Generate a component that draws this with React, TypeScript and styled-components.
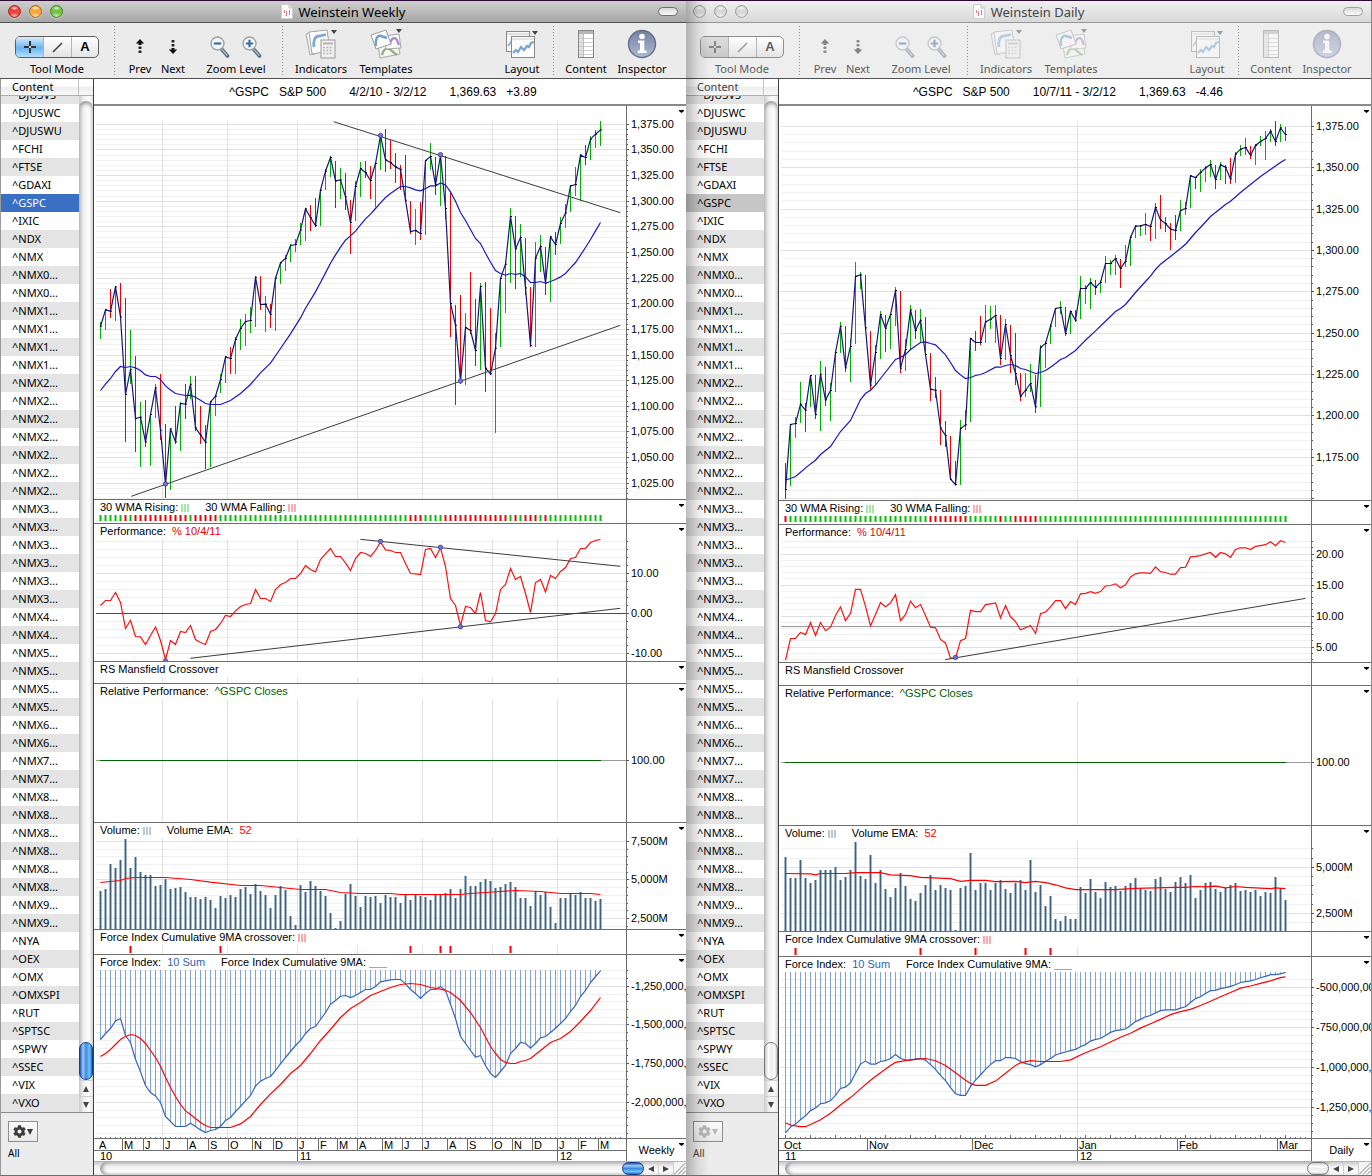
import React from "react";
import styled, { createGlobalStyle, css } from "styled-components";
import { FaCog } from "react-icons/fa";

/* ---------- data ---------- */

type Point = [number, number];
type Bar = [high: number, low: number, close: number, up: number];

interface Scale {
  unit: number;
  origin: number;
}
interface Grid {
  first: number;
  step: number;
  labels: string[];
}
interface LegendItem {
  label: string;
  value?: string;
  color?: string;
  swatch?: "bars" | "line";
}
interface Trend {
  line: [number, number, number, number];
  dots: Point[];
}
interface PaneData {
  height: number;
  legend: LegendItem[];
  scale: Scale;
  grid?: Grid;
  bars?: Bar[];
  lines?: { color: string; points: Point[] }[];
  volume?: number[];
  hatch?: number[];
  strip?: string;
  marks?: number[];
  rule?: { y: number; color: string };
  flat?: number;
  trends?: Trend[];
  timeTicks?: "even" | "weeks";
}
interface ChartData {
  title: string;
  range: string;
  price: string;
  change: string;
  period: string;
  verticals: number[];
  panes: PaneData[];
  months: { x: number; label: string }[];
  years: { x: number; label: string }[];
  active: boolean;
}

const seq = (values: number[]): Point[] => values.map((v, i) => [i, v]);

const weeklyBars: Bar[] = [
  [665,717,678,1],[627,690,629,1],[567,654,633,0],[558,662,560,1],[549,656,650,0],[594,1025,883,0],[690,852,808,1],
  [768,1056,955,0],[906,1101,951,1],[900,1041,1025,0],[940,1098,943,1],[852,953,863,1],[822,1020,990,0],[972,1194,1152,0],
  [985,1170,986,1],[918,1030,1025,0],[906,1053,910,1],[852,957,912,0],[828,897,852,1],[828,993,983,0],[918,1032,1004,0],
  [975,1106,1026,0],[903,1101,905,1],[886,948,888,1],[822,879,838,1],[768,849,770,1],[741,822,775,0],[709,822,718,1],
  [657,750,685,1],[642,738,664,1],[621,699,661,1],[528,681,531,1],[528,630,613,0],[588,696,612,1],[612,684,642,0],
  [532,693,534,1],[485,552,488,1],[465,513,475,1],[430,486,436,1],[416,456,433,1],[369,435,390,1],[324,423,326,1],
  [315,393,352,0],[294,381,376,0],[268,378,270,1],[207,270,213,1],[168,231,172,1],[183,324,242,0],[204,297,239,1],
  [219,330,290,0],[300,462,367,0],[243,363,259,1],[186,291,205,1],[183,234,217,0],[198,297,241,0],[188,321,190,1],
  [103,210,106,1],[87,216,179,0],[118,207,187,0],[159,249,200,0],[195,270,208,0],[165,306,300,0],[303,402,394,0],
  [327,435,391,1],[306,420,400,0],[178,405,181,1],[129,210,169,1],[171,285,254,0],[163,318,166,1],[168,357,325,0],
  [279,711,610,0],[615,915,675,0],[585,852,842,0],[639,855,682,1],[516,702,691,0],[597,798,751,0],[549,810,559,1],
  [546,876,804,0],[624,825,821,0],[699,999,744,1],[533,741,535,1],[490,639,492,1],[324,549,349,1],[348,567,446,0],
  [372,531,412,1],[414,585,563,0],[561,741,736,0],[426,741,474,1],[405,516,439,1],[441,585,549,0],[408,606,410,1],
  [396,465,433,0],[351,432,370,1],[312,384,338,1],[255,336,257,1],[201,288,253,1],[162,303,165,1],[135,195,172,0],
  [108,180,117,1],[90,144,102,1],[63,138,89,1],
];

const weeklyAverage: Point[] = [
  [0,871],[1,852],[2,835],[3,814],[4,799],[5,802],[6,799],[7,803],[8,811],[9,824],[10,829],[11,829],[12,838],[13,857],
  [14,869],[15,880],[16,883],[17,886],[18,885],[19,891],[20,900],[21,910],[22,913],[24,913],[26,901],[28,880],[30,853],
  [32,818],[34,789],[36,745],[38,701],[40,653],[41,624],[43,575],[44,547],[45,518],[46,489],[47,464],[48,441],[49,420],
  [50,407],[51,393],[52,374],[53,356],[54,342],[55,325],[56,308],[57,292],[58,280],[59,269],[60,259],[61,259],[62,263],
  [63,269],[64,272],[65,265],[66,257],[67,257],[68,248],[69,254],[70,275],[71,303],[72,337],[73,361],[74,388],[75,415],
  [76,430],[77,459],[78,486],[79,511],[80,520],[81,525],[82,520],[83,523],[84,520],[85,530],[86,547],[87,547],[88,544],
  [89,549],[90,544],[91,538],[92,530],[93,520],[94,503],[95,487],[96,465],[97,442],[98,418],[99,392],[100,367],
];

const weeklyPerformance = [
  331,316,316,292,322,400,376,424,425,448,421,395,436,493,436,448,409,412,391,433,442,448,409,403,385,361,364,347,334,
  328,325,283,310,310,319,283,268,262,250,250,235,211,223,230,193,176,160,184,184,203,226,190,172,175,184,166,140,164,
  166,172,172,205,235,236,238,163,160,187,158,214,310,331,391,334,337,355,292,376,380,355,283,268,220,253,244,295,352,
  262,253,290,241,250,229,217,190,187,160,160,142,136,133,
];

const weeklyVolume = [
  213,205,132,142,118,55,142,109,154,163,163,196,193,177,205,202,199,214,229,229,235,229,238,262,226,232,223,229,205,
  199,220,190,211,223,262,223,196,208,286,313,193,214,181,196,211,226,277,322,301,220,190,226,259,226,229,226,247,223,
  229,229,247,223,238,223,226,229,238,220,220,217,205,232,205,166,196,196,184,175,181,202,199,190,184,199,232,232,256,
  211,223,214,259,307,232,232,220,223,214,232,232,241,235,
];

const weeklyVolumeAverage: Point[] = [
  [0,187],[4,181],[5,175],[7,172],[13,172],[18,178],[22,186],[28,196],[32,196],[38,205],[40,208],[45,208],[48,217],
  [52,220],[58,220],[60,223],[72,223],[74,220],[80,214],[83,211],[88,214],[90,217],[92,220],[98,220],[100,223],
];

const weeklyForce = [
  658,640,625,602,595,646,667,717,755,796,817,827,847,889,904,919,919,919,909,919,929,937,931,928,919,901,892,874,859,
  842,826,798,783,775,769,751,731,712,694,676,661,640,625,619,598,577,552,541,528,526,532,526,517,508,508,499,485,482,
  479,478,478,491,508,520,535,520,508,508,499,511,552,595,649,670,691,711,706,736,760,772,754,736,700,685,667,670,684,
  670,653,649,637,624,610,595,574,556,529,511,487,469,452,
];

const weeklyForceAverage: Point[] = [
  [0,709],[1,700],[2,688],[3,673],[4,658],[5,649],[6,643],[7,646],[8,655],[9,670],[10,691],[11,712],[12,738],[13,771],
  [14,802],[15,829],[16,853],[17,872],[18,883],[19,895],[20,907],[21,916],[22,922],[26,922],[28,911],[30,889],[32,853],
  [34,821],[36,793],[38,760],[40,736],[42,700],[44,661],[46,628],[48,592],[50,565],[52,547],[54,526],[56,514],[58,502],
  [60,493],[62,490],[64,493],[66,502],[68,507],[69,511],[70,517],[72,541],[74,577],[76,622],[78,679],[79,700],[80,718],
  [81,727],[82,730],[83,730],[84,724],[85,721],[86,715],[88,691],[90,667],[92,655],[94,634],[96,604],[98,571],[100,532],
];

const dailyBars: Bar[] = [
  [1149,1257,1228,0],[1032,1218,1033,1],[1011,1074,1030,1],[906,1029,972,1],[969,1056,990,0],[886,981,886,1],
  [885,1017,1003,0],[843,1053,882,1],[861,978,959,0],[909,1023,931,1],[815,934,817,1],[726,819,738,1],[738,876,863,0],
  [777,906,799,1],[546,792,589,1],[576,627,584,1],[585,745,743,0],[753,933,915,0],[795,914,817,1],[693,837,703,1],
  [705,815,744,0],[702,807,703,1],[621,738,631,1],[633,879,864,0],[777,873,808,1],[675,809,689,1],[690,777,751,0],
  [687,789,720,1],[711,825,823,0],[819,963,927,0],[891,954,930,0],[930,1095,1043,0],[1023,1101,1066,0],
  [1068,1200,1197,0],[1143,1215,1213,0],[1020,1215,1045,1],[990,1050,1034,1],[774,1026,775,1],[753,813,787,0],
  [708,795,787,0],[675,789,725,1],[678,747,717,1],[675,789,706,1],[705,855,835,0],[717,840,733,1],[735,877,826,0],
  [759,915,880,0],[879,963,948,0],[879,951,931,1],[852,936,910,1],[885,999,980,0],[795,981,802,1],[783,863,790,1],
  [732,792,738,1],[684,741,685,1],[663,702,682,1],[681,768,760,0],[693,762,694,1],[690,725,720,0],[588,717,625,1],
  [615,672,625,1],[594,687,607,1],[600,645,622,0],[600,639,607,1],[528,609,550,1],[540,585,550,1],[525,585,535,1],
  [537,624,565,0],[495,561,543,1],[468,558,471,1],[435,474,438,1],[435,468,437,1],[399,465,433,1],[432,483,439,0],
  [369,477,382,1],[345,447,419,0],[411,456,430,0],[429,510,447,0],[405,480,451,0],[360,453,391,1],[366,405,385,1],
  [285,384,287,1],[291,327,292,0],[267,336,277,1],[258,306,263,1],[240,291,253,1],[255,327,298,0],[246,300,254,1],
  [255,312,261,0],[234,312,296,0],[216,309,222,1],[195,228,207,1],[174,225,202,1],[198,237,225,0],[192,255,196,1],
  [168,198,184,1],[153,240,175,1],[147,186,153,1],[123,198,184,0],[132,186,143,1],[141,183,163,0],
];

const dailyAverage: Point[] = [
  [0,1199],[1,1195],[2,1189],[5,1151],[6,1140],[7,1123],[9,1099],[11,1054],[13,1021],[15,958],[16,940],[17,930],
  [18,915],[19,895],[22,838],[23,832],[24,823],[25,808],[27,787],[28,785],[29,790],[30,794],[32,824],[33,847],[34,871],
  [35,884],[36,895],[37,892],[38,886],[39,883],[40,877],[42,861],[43,861],[44,856],[45,853],[46,856],[47,865],[48,868],
  [50,880],[51,877],[52,871],[53,861],[54,850],[55,838],[56,832],[57,821],[58,811],[60,780],[62,752],[64,723],[66,694],
  [67,685],[68,673],[70,637],[72,604],[73,588],[74,568],[75,552],[77,529],[79,505],[80,492],[81,475],[82,457],[83,442],
  [85,409],[87,385],[88,373],[89,363],[91,337],[93,313],[95,289],[97,268],[99,247],[100,238],
];

const dailyPerformance = [
  380,330,330,316,321,293,323,293,312,304,277,257,289,272,217,217,256,301,275,247,257,248,229,289,275,244,259,252,277,
  304,305,332,340,375,375,335,330,265,268,268,252,250,248,282,254,280,291,310,305,300,318,273,269,257,243,243,261,245,
  252,227,226,222,226,222,209,208,204,213,206,188,181,179,179,180,165,176,178,182,182,167,166,142,141,139,135,132,143,
  132,135,143,125,121,121,125,118,116,114,107,116,105,109,
];

const dailyVolume = [
  832,881,881,841,881,894,887,864,862,862,857,887,878,862,798,876,884,829,894,862,906,924,904,871,899,929,934,917,897,
  874,908,897,904,908,1000,904,899,823,908,894,894,910,892,887,906,917,894,887,908,841,914,897,945,922,975,980,970,975,
  975,901,917,884,914,927,890,901,899,912,899,894,881,904,910,912,883,879,906,914,890,879,894,874,927,910,894,890,906,
  914,904,897,894,912,908,914,908,922,914,917,878,904,932,
];

const dailyVolumeAverage: Point[] = [
  [0,871],[5,872],[6,874],[7,871],[12,871],[14,869],[19,869],[21,874],[25,876],[27,880],[33,883],[35,889],[37,887],
  [40,887],[42,890],[46,889],[48,892],[50,889],[52,892],[54,897],[56,904],[58,908],[66,908],[70,905],[78,903],[80,903],
  [82,901],[84,902],[86,900],[88,904],[90,901],[92,903],[97,906],[98,904],[100,906],
];

const dailyForce = [
  1468,1455,1448,1438,1429,1417,1411,1401,1399,1394,1382,1366,1363,1353,1331,1310,1303,1310,1310,1304,1302,1297,1288,
  1297,1300,1301,1298,1297,1301,1311,1322,1336,1348,1364,1378,1382,1382,1362,1347,1335,1322,1311,1302,1302,1295,1295,
  1297,1304,1309,1311,1316,1311,1304,1297,1289,1285,1282,1279,1276,1270,1265,1257,1253,1251,1244,1237,1233,1231,1229,
  1221,1212,1207,1201,1198,1192,1187,1185,1185,1185,1181,1178,1168,1159,1155,1147,1141,1140,1136,1134,1131,1127,1122,
  1120,1118,1115,1111,1108,1104,1104,1102,1099,
];

const dailyForceAverage: Point[] = [
  [0,1445],[1,1450],[2,1452],[3,1454],[4,1454],[5,1449],[7,1438],[9,1423],[11,1404],[13,1387],[15,1367],[17,1347],
  [19,1330],[21,1313],[22,1306],[24,1302],[26,1299],[28,1297],[30,1302],[32,1313],[34,1330],[36,1347],[37,1354],
  [38,1359],[40,1359],[42,1349],[44,1331],[46,1313],[47,1307],[49,1302],[51,1304],[55,1304],[57,1300],[59,1289],
  [61,1279],[63,1270],[65,1259],[67,1248],[69,1239],[71,1227],[73,1217],[75,1207],[77,1196],[79,1189],[81,1184],
  [83,1175],[85,1165],[87,1155],[89,1145],[91,1135],[93,1130],[95,1124],[97,1118],[99,1111],[100,1109],
];

const strip = (ranges: [string, number][]) => ranges.map(([c, n]) => c.repeat(n)).join("");
const weeklyStrip = strip([
  ["g",5],["r",1],["g",1],["r",11],["g",1],["r",5],["g",38],["r",3],["g",4],["r",13],["g",1],["r",1],["g",1],["r",3],
  ["g",1],["r",1],["g",11],
]);
const dailyStrip = strip([["r",1],["g",28],["r",8],["g",6],["r",1],["g",2],["r",5],["g",50]]);

const plain: Scale = { unit: 1, origin: 0 };
const wmaLegend: LegendItem[] = [
  { label: "30 WMA Rising:", swatch: "bars", color: "#a6e8a6" },
  { label: "30 WMA Falling:", swatch: "bars", color: "#f9b0b0" },
];
const performanceLegend: LegendItem[] = [{ label: "Performance:", value: "% 10/4/11", color: "#e60000" }];
const mansfieldLegend: LegendItem[] = [{ label: "RS Mansfield Crossover" }];
const relativeLegend: LegendItem[] = [{ label: "Relative Performance:", value: "^GSPC Closes", color: "#006000" }];
const volumeLegend: LegendItem[] = [
  { label: "Volume:", swatch: "bars", color: "#bcc8d2" },
  { label: "Volume EMA:", value: "52", color: "#ff0000" },
];
const crossoverLegend: LegendItem[] = [
  { label: "Force Index Cumulative 9MA crossover:", swatch: "bars", color: "#ffa8a8" },
];
const forceLegend: LegendItem[] = [
  { label: "Force Index:", value: "10 Sum", color: "#2f5fae" },
  { label: "Force Index Cumulative 9MA:", swatch: "line", color: "#ff8080" },
];

const priceLabels = (top: number, count: number) =>
  Array.from({ length: count }, (_, i) => (top - i * 25).toLocaleString("en-US", { minimumFractionDigits: 2 }));

const weeklyMonths: [number, string][] = [
  [3,"A"],[28,"M"],[49,"J"],[69,"J"],[93,"A"],[114,"S"],[134,"O"],[158,"N"],[179,"D"],[203,"J"],[224,"F"],[243,"M"],
  [263,"A"],[288,"M"],[308,"J"],[328,"J"],[353,"A"],[373,"S"],[398,"O"],[418,"N"],[438,"D"],[463,"J"],[484,"F"],[504,"M"],
];

const weekly: ChartData = {
  title: "Weinstein Weekly",
  range: "4/2/10 - 3/2/12",
  price: "1,369.63",
  change: "+3.89",
  period: "Weekly",
  active: true,
  verticals: [68, 133, 203, 263, 328, 398, 463],
  months: weeklyMonths.map(([x, label]) => ({ x, label })),
  years: [{ x: 3, label: "10" }, { x: 203, label: "11" }, { x: 463, label: "12" }],
  panes: [
    {
      height: 394, legend: [], scale: { unit: 3, origin: -21 },
      grid: { first: 3.3, step: 25.64, labels: priceLabels(1375, 15) },
      bars: weeklyBars,
      lines: [{ color: "#1a14c8", points: weeklyAverage }],
      trends: [
        { line: [239.7, 0.7, 526.3, 91.7], dots: [[56, 14.5], [68, 33.7]] },
        { line: [37.3, 375.3, 526.3, 204.3], dots: [[13, 363], [72, 260]] },
      ],
    },
    { height: 24, legend: wmaLegend, scale: plain, strip: weeklyStrip },
    {
      height: 138, legend: performanceLegend, scale: { unit: 3, origin: -44 },
      grid: { first: 34.3, step: 40, labels: ["10.00", "0.00", "-10.00"] },
      rule: { y: 74, color: "#ff0000" },
      lines: [{ color: "#ff1010", points: seq(weeklyPerformance) }],
      trends: [
        { line: [266.3, 0.3, 526.3, 27.3], dots: [[56, 2.3], [68, 8.3]] },
        { line: [96.3, 119.3, 526.3, 69.3], dots: [[13, 122], [72, 87.7]] },
      ],
    },
    { height: 22, legend: mansfieldLegend, scale: plain },
    { height: 139, legend: relativeLegend, scale: plain, flat: 61 },
    {
      height: 107, legend: volumeLegend, scale: { unit: 3, origin: -18 },
      grid: { first: 3.3, step: 38.6, labels: ["7,500M", "5,000M", "2,500M"] },
      volume: weeklyVolume,
      lines: [{ color: "#ff0000", points: weeklyVolumeAverage }],
    },
    { height: 25, legend: crossoverLegend, scale: plain, marks: [6, 24, 62, 68, 70, 82] },
    {
      height: 184, legend: forceLegend, scale: { unit: 3, origin: -150 },
      grid: { first: 16.3, step: 38.67, labels: ["-1,250,000,", "-1,500,000,", "-1,750,000,", "-2,000,000,"] },
      hatch: weeklyForce,
      timeTicks: "even",
      lines: [
        { color: "#3565b5", points: seq(weeklyForce) },
        { color: "#ff0000", points: weeklyForceAverage },
      ],
    },
  ],
};

const daily: ChartData = {
  title: "Weinstein Daily",
  range: "10/7/11 - 3/2/12",
  price: "1,369.63",
  change: "-4.46",
  period: "Daily",
  active: false,
  verticals: [298],
  months: [
    { x: 3, label: "Oct" }, { x: 88, label: "Nov" }, { x: 193, label: "Dec" },
    { x: 298, label: "Jan" }, { x: 398, label: "Feb" }, { x: 498, label: "Mar" },
  ],
  years: [{ x: 3, label: "11" }, { x: 298, label: "12" }],
  panes: [
    {
      height: 395, legend: [], scale: { unit: 3, origin: -41 },
      grid: { first: 5.3, step: 41.38, labels: priceLabels(1375, 9) },
      bars: dailyBars,
      lines: [{ color: "#1a14c8", points: dailyAverage }],
    },
    { height: 24, legend: wmaLegend, scale: plain, strip: dailyStrip },
    {
      height: 138, legend: performanceLegend, scale: { unit: 2.3025, origin: -45 },
      grid: { first: 14, step: 31, labels: ["20.00", "15.00", "10.00", "5.00"] },
      rule: { y: 86, color: "#999999" },
      lines: [{ color: "#ff1010", points: seq(dailyPerformance) }],
      trends: [{ line: [166.2, 119.6, 526.5, 58.4], dots: [[34, 117.4]] }],
    },
    { height: 23, legend: mansfieldLegend, scale: plain },
    { height: 140, legend: relativeLegend, scale: plain, flat: 61 },
    {
      height: 106, legend: volumeLegend, scale: { unit: 2.3025, origin: -346 },
      grid: { first: 26.2, step: 46, labels: ["5,000M", "2,500M"] },
      volume: dailyVolume,
      lines: [{ color: "#ff0000", points: dailyVolumeAverage }],
    },
    { height: 25, legend: crossoverLegend, scale: plain, marks: [2, 27, 38, 48, 53] },
    {
      height: 182, legend: forceLegend, scale: { unit: 2.3025, origin: -477 },
      grid: { first: 15.5, step: 40, labels: ["-500,000,00", "-750,000,00", "-1,000,000,", "-1,250,000,"] },
      hatch: dailyForce,
      timeTicks: "weeks",
      lines: [
        { color: "#3565b5", points: seq(dailyForce) },
        { color: "#ff0000", points: dailyForceAverage },
      ],
    },
  ],
};

const repeat = (name: string, n: number) => Array<string>(n).fill(name);
const symbols = [
  "^DJUSVS", "^DJUSWC", "^DJUSWU", "^FCHI", "^FTSE", "^GDAXI", "^GSPC", "^IXIC", "^NDX", "^NMX",
  ...repeat("^NMX0…", 2), ...repeat("^NMX1…", 4), ...repeat("^NMX2…", 7), ...repeat("^NMX3…", 6),
  ...repeat("^NMX4…", 2), ...repeat("^NMX5…", 4), ...repeat("^NMX6…", 2), ...repeat("^NMX7…", 2),
  ...repeat("^NMX8…", 6), ...repeat("^NMX9…", 2),
  "^NYA", "^OEX", "^OMX", "^OMXSPI", "^RUT", "^SPTSC", "^SPWY", "^SSEC", "^VIX", "^VXO",
];

/* ---------- styles ---------- */

const ui = '"Noto Sans", "Open Sans", sans-serif';
const chartFont = '"Liberation Sans", Arial, sans-serif';
const lineColor = "#6e6e6e";

const GlobalStyle = createGlobalStyle`
  *, *::before, *::after { box-sizing: border-box; }
  body { margin: 0; background: #2b0a33; font-family: ${ui}; font-size: 11px; color: #000; }
  button { margin: 0; padding: 0; border: 0; background: none; font: inherit; color: inherit; }
  svg { display: block; }
`;

const Desktop = styled.main`
  display: grid;
  grid-template-columns: 1fr 1fr;
  padding-top: 1px;
  min-height: 100vh;
`;

const WindowFrame = styled.section<{ $active: boolean }>`
  position: relative;
  display: flex;
  flex-direction: column;
  min-width: 0;
  background: #ececec;
  border-bottom: 1px solid ${lineColor};
  ${(p) =>
    !p.$active &&
    css`
      border-right: 1px solid #8a8a8a;
      &::before {
        content: "";
        position: absolute;
        inset: 0 auto 0 0;
        width: 24px;
        background: linear-gradient(90deg, rgba(0, 0, 0, 0.26), rgba(0, 0, 0, 0.08) 50%, rgba(0, 0, 0, 0));
        pointer-events: none;
        z-index: 2;
      }
    `}
`;

const TitleBar = styled.header<{ $active: boolean }>`
  display: grid;
  grid-template-columns: 80px 1fr 80px;
  align-items: center;
  height: 22px;
  border-bottom: 1px solid ${(p) => (p.$active ? "#515151" : "#969696")};
  background: ${(p) =>
    p.$active ? "linear-gradient(#cfcfcf, #a6a6a6)" : "linear-gradient(#f0f0f0, #d9d9d9)"};
`;

const Lights = styled.div<{ $active: boolean }>`
  display: flex;
  gap: 8px;
  padding-left: ${(p) => (p.$active ? 8 : 7)}px;
`;

const Light = styled.button<{ $tone: string; $edge: string }>`
  width: 13px;
  height: 13px;
  border: 1px solid ${(p) => p.$edge};
  border-radius: 50%;
  background: radial-gradient(ellipse 4px 2px at 50% 20%, #ffffffd0, #ffffff00),
    radial-gradient(ellipse 5px 3px at 50% 88%, #ffffff90, #ffffff00), ${(p) => p.$tone};
  box-shadow: 0 1px 0 #ffffff60;
`;

const Title = styled.h1<{ $active: boolean }>`
  display: flex;
  align-items: center;
  justify-content: center;
  gap: 6px;
  margin: 0;
  font-size: 13px;
  line-height: 20px;
  font-weight: 400;
  color: ${(p) => (p.$active ? "#000" : "#444")};
`;

const Pill = styled.button<{ $active: boolean }>`
  justify-self: end;
  margin-right: 8px;
  width: 20px;
  height: 9px;
  border: 1px solid ${(p) => (p.$active ? "#6f6f6f" : "#a0a0a0")};
  border-radius: 5px;
  background: linear-gradient(#d8d8d8, #fafafa);
`;

const Toolbar = styled.div<{ $active: boolean }>`
  display: flex;
  align-items: stretch;
  height: 56px;
  padding: 3px 18px 2px ${(p) => (p.$active ? 15 : 14)}px;
  border-bottom: 1px solid #515151;
  background: ${(p) => (p.$active ? "#ebebeb" : "#eeeeee")};
  color: ${(p) => (p.$active ? "#000" : "#5c5c5c")};
  svg {
    opacity: ${(p) => (p.$active ? 1 : 0.48)};
  }
`;

const ToolItem = styled.div<{ $width: number; $gap?: number }>`
  display: flex;
  flex-direction: column;
  align-items: center;
  width: ${(p) => p.$width}px;
  margin-left: ${(p) => p.$gap ?? 0}px;
  white-space: nowrap;
`;

const ToolFace = styled.div`
  display: flex;
  flex: none;
  align-items: center;
  justify-content: center;
  height: 36px;
`;

const ToolLabel = styled.span`
  line-height: 14px;
`;

const ToolButton = styled.button<{ $small?: boolean }>`
  display: flex;
  flex: none;
  align-items: center;
  justify-content: center;
  min-width: 32px;
  height: 36px;
  padding-top: ${(p) => (p.$small ? 5 : 0)}px;
`;

const Divider = styled.div<{ $gap: number }>`
  width: 1px;
  margin-left: ${(p) => p.$gap}px;
  background: repeating-linear-gradient(#8c8c8c 0 1px, transparent 1px 3px);
`;

const Spacer = styled.div`
  flex: 1;
`;

const Segments = styled.div<{ $active: boolean }>`
  display: grid;
  grid-template-columns: repeat(3, 1fr);
  width: 84px;
  height: 22px;
  margin-top: 6px;
  border: 1px solid ${(p) => (p.$active ? "#5e5e5e" : "#8e8e8e")};
  border-radius: 5px;
  overflow: hidden;
  background: linear-gradient(#ffffff, #e4e4e4);
`;

const Segment = styled.button<{ $on: boolean; $active: boolean }>`
  display: flex;
  align-items: center;
  justify-content: center;
  & + & {
    border-left: 1px solid #b5b5b5;
  }
  ${(p) =>
    p.$on &&
    css`
      background: ${p.$active ? "linear-gradient(#dcecfa, #6db4ef 55%, #b5e2ff)" : "linear-gradient(#dedede, #c9c9c9)"};
    `}
`;

const LetterA = styled.span`
  font: 700 13px/18px ${chartFont};
`;

const Body = styled.div`
  display: flex;
  flex: 1;
  min-height: 0;
`;

const Sidebar = styled.aside<{ $active: boolean }>`
  display: flex;
  flex-direction: column;
  flex: none;
  width: ${(p) => (p.$active ? 94 : 93)}px;
  border-left: ${(p) => (p.$active ? "1px solid #9a9a9a" : "0")};
  border-right: 1px solid #404040;
`;

const ListHeader = styled.div<{ $active: boolean }>`
  display: grid;
  grid-template-columns: 1fr 14px;
  height: 17px;
  border-bottom: 1px solid #b0b0b0;
  background: linear-gradient(#ffffff 45%, #ededed 50%, #f8f8f8);
  line-height: 16px;
  color: ${(p) => (p.$active ? "#000" : "#444")};
  > span {
    padding-left: 11px;
    border-right: 1px solid #c4c4c4;
  }
`;

const ListArea = styled.div`
  display: grid;
  grid-template-columns: 1fr 14px;
  height: 1017px;
  border-bottom: 1px solid #8c8c8c;
`;

const SymbolList = styled.ul`
  display: flex;
  flex-direction: column;
  justify-content: flex-end;
  margin: 0;
  padding: 0;
  list-style: none;
  overflow: hidden;
`;

const SymbolRow = styled.li<{ $shade: boolean; $selected: boolean; $active: boolean }>`
  flex: none;
  height: 18px;
  background: ${(p) =>
    p.$selected ? (p.$active ? "#3a70c4" : "#c6c6c6") : p.$shade ? "#e4e4e4" : "#ffffff"};
  color: ${(p) => (p.$selected && p.$active ? "#fff" : "#000")};
`;

const SymbolButton = styled.button`
  display: block;
  width: 100%;
  height: 18px;
  padding-left: 11px;
  text-align: left;
  line-height: 18px;
  white-space: nowrap;
`;

const VScroll = styled.div`
  display: flex;
  flex-direction: column;
  padding-top: 5px;
  background: linear-gradient(90deg, #c9c9c9, #f1f1f1 35%, #fdfdfd 70%, #e6e6e6);
`;

const VTrack = styled.div`
  display: flex;
  flex: 1;
  align-items: flex-end;
  border-radius: 7px 7px 0 0;
  box-shadow: inset 0 3px 4px -1px #8a8a8a;
`;

const gel = (vertical: boolean, active: boolean) => {
  const angle = vertical ? "90deg" : "180deg";
  return active
    ? `linear-gradient(${angle}, #1c50ae, #9fcbf7 25%, #3d8ae0 50%, #6fc3fb 80%, #1d62bd)`
    : `linear-gradient(${angle}, #c9c9c9, #ffffff 30%, #ececec 52%, #fafafa 80%, #c9c9c9)`;
};

const VThumb = styled.div<{ $active: boolean }>`
  width: 14px;
  height: 38px;
  border: 1px solid ${(p) => (p.$active ? "#123f92" : "#777")};
  border-radius: 7px;
  background: ${(p) => gel(true, p.$active)};
`;

const VArrow = styled.button`
  display: flex;
  align-items: center;
  justify-content: center;
  height: 16px;
  border-top: 1px solid #cfcfcf;
`;

const SideFooter = styled.div<{ $active: boolean }>`
  display: flex;
  flex-direction: column;
  align-items: flex-start;
  gap: 4px;
  padding: 8px 7px;
  color: ${(p) => (p.$active ? "#000" : "#444")};
  font-size: 10px;
  line-height: 14px;
`;

const GearButton = styled.button<{ $active: boolean }>`
  display: flex;
  align-items: center;
  justify-content: center;
  gap: 1px;
  width: 30px;
  height: 21px;
  border: 1px solid #8e8e8e;
  background: linear-gradient(#fbfbfb, #e9e9e9);
  color: ${(p) => (p.$active ? "#3c3c3c" : "#b8b8b8")};
`;

const ChartArea = styled.div`
  display: flex;
  flex-direction: column;
  flex: 1;
  min-width: 0;
  background: #fff;
  font-family: ${chartFont};
`;

const Quote = styled.div`
  display: flex;
  justify-content: center;
  height: 27px;
  padding-right: 14px;
  border-bottom: 2px solid #8a8a8a;
  font-size: 12px;
  line-height: 27px;
  white-space: nowrap;
  > span + span { margin-left: 23px; }
  > span:nth-child(2), > span:nth-child(5) { margin-left: 10px; }
`;

const PaneRow = styled.div<{ $height: number }>`
  display: flex;
  height: ${(p) => p.$height}px;
  border-bottom: 1px solid ${lineColor};
`;

const PlotColumn = styled.div`
  flex: 1;
  min-width: 0;
  overflow: hidden;
`;

const AxisColumn = styled.div`
  position: relative;
  flex: none;
  width: 60px;
  border-left: 1px solid ${lineColor};
`;

const Legend = styled.div`
  display: flex;
  gap: 16px;
  height: 15px;
  padding-left: 6px;
  font-size: 11px;
  line-height: 15px;
  white-space: nowrap;
`;

const LegendEntry = styled.span`
  display: flex;
  gap: 3px;
`;

const LegendValue = styled.span<{ $color: string }>`
  padding-left: 3px;
  color: ${(p) => p.$color};
`;

const SwatchBars = styled.span<{ $color: string }>`
  align-self: center;
  width: 8px;
  height: 8px;
  background: repeating-linear-gradient(90deg, ${(p) => p.$color} 0 2px, transparent 2px 3px);
`;

const SwatchLine = styled.span<{ $color: string }>`
  width: 18px;
  height: 13px;
  border-bottom: 1px solid ${(p) => p.$color};
`;

const PaneMenu = styled.button`
  position: absolute;
  top: 3px;
  right: 0;
  width: 7px;
  height: 5px;
`;

const Time = styled.div`
  display: flex;
  height: 22px;
`;

const Period = styled.div`
  display: flex;
  align-items: center;
  justify-content: center;
  height: 21px;
  font-size: 11px;
`;

const HScroll = styled.div`
  display: flex;
  flex: 1;
  min-height: 14px;
  border-top: 1px solid #b5b5b5;
  background: linear-gradient(#c9c9c9, #f1f1f1 35%, #fdfdfd 70%, #e6e6e6);
`;

const HTrack = styled.div`
  display: flex;
  flex: 1;
  justify-content: flex-end;
  margin-left: 6px;
  border-radius: 7px 0 0 7px;
  box-shadow: inset 3px 0 4px -1px #8a8a8a;
`;

const HThumb = styled.div<{ $active: boolean }>`
  width: 22px;
  border: 1px solid ${(p) => (p.$active ? "#123f92" : "#777")};
  border-radius: 7px;
  background: ${(p) => gel(false, p.$active)};
`;

const HArrow = styled.button`
  display: flex;
  align-items: center;
  justify-content: center;
  width: 15px;
  border-right: 1px solid #cfcfcf;
`;

const Grip = styled.div`
  display: flex;
  align-items: flex-end;
  width: 12px;
  background: #f4f4f4;
`;

/* ---------- icons ---------- */

const Triangle = ({ dir, size = 6, color = "#444" }: { dir: "up" | "down" | "left" | "right"; size?: number; color?: string }) => {
  const shapes = { up: "M0 8 4 0 8 8Z", down: "M0 0 8 0 4 8Z", left: "M8 0 8 8 0 4Z", right: "M0 0 8 4 0 8Z" };
  return (
    <svg width={size} height={size} viewBox="0 0 8 8"><path d={shapes[dir]} fill={color} /></svg>
  );
};

const MenuMark = () => (
  <svg width="5" height="3" viewBox="0 0 5 3"><path d="M0 0H5V1L2.5 3 0 1Z" fill="#000" /></svg>
);

const GripIcon = () => (
  <svg width="12" height="13" viewBox="0 0 12 13">
    <path d="M0 12.5 11.500 1M4 12.500 11.500 5M8 12.500 11.500 9" stroke="#8a8a8a" />
  </svg>
);

const DocIcon = () => (
  <svg width="12" height="15" viewBox="0 0 12 15">
    <path d="M.5.5H8L11.5 4V14.5H.5Z" fill="#fafafa" stroke="#d0d0d0" />
    <path d="M8 .5V4H11.5" fill="#e2e2e2" stroke="#c4c4c4" />
    <path d="M3.5 6V9M5.5 7V12" stroke="#dc7f8d" />
    <path d="M8.5 6V11" stroke="#8f97b8" />
  </svg>
);

const CrossIcon = () => (
  <svg width="12" height="12" viewBox="0 0 12 12">
    <path d="M6 0V12M0 6H12" stroke="#333" strokeWidth="2" />
    <rect x="5" y="5" width="2" height="2" fill="#c9e2f6" />
  </svg>
);

const SlashIcon = () => (
  <svg width="11" height="11" viewBox="0 0 11 11"><path d="M1 10 10 1" stroke="#444" strokeWidth="1.6" /></svg>
);

const StepIcon = ({ down }: { down?: boolean }) => (
  <svg width="10" height="15" viewBox="0 0 10 15">
    <g transform={down ? "matrix(1 0 0 -1 0 15)" : undefined}>
      <path d="M5 0 9.200 4.600H6.500V6H3.500V4.600H.8Z" fill="#111" />
      <rect x="3.500" y="7.500" width="3" height="2.500" rx=".8" fill="#222" />
      <rect x="3.500" y="11.500" width="3" height="2.500" rx=".8" fill="#222" />
    </g>
  </svg>
);

const ZoomIcon = ({ plus }: { plus?: boolean }) => (
  <svg width="20" height="22" viewBox="0 0 20 22">
    <path d="M11.500 13 17.500 20" stroke="#5c6b7c" strokeWidth="3.600" strokeLinecap="round" />
    <path d="M12 13.500 17 19.300" stroke="#b4c0cc" strokeWidth="1.200" strokeLinecap="round" />
    <circle cx="7.500" cy="7.500" r="6.500" fill="#f3f8fc" stroke="#a2a2a2" strokeWidth="1.400" />
    <path d={plus ? "M3.800 7.500H11.200M7.500 3.800V11.200" : "M3.800 7.500H11.200"} stroke="#3d6d9c" strokeWidth="2.200" />
  </svg>
);

const IndicatorsIcon = () => (
  <svg width="32" height="30" viewBox="0 0 32 30">
    <path d="M1 5 5 3 10 25 5 26Z" fill="#f2f2f2" stroke="#aaa" />
    <path d="M4 3 22 1 25 22 7 25Z" fill="#fbfbfb" stroke="#a5a5a5" />
    <path d="M9 18C8 12 10 7 14 7L21 5.500" fill="none" stroke="#7fa9d6" strokeWidth="2.800" />
    <rect x="16" y="11" width="14" height="18" fill="#f1f1f1" stroke="#999" />
    <path d="M18 14.500H28" stroke="#b5b5b5" strokeWidth="2" />
    <path d="M18 18.500H28M18 21.500H28M18 24.500H28" stroke="#b8b8b8" strokeDasharray="2 1.300" strokeWidth="1.600" />
    <path d="M26 1H32L29 5Z" fill="#444" />
  </svg>
);

const TemplatesIcon = () => (
  <svg width="32" height="30" viewBox="0 0 32 30">
    <path d="M8 16 28 13 30 25 10 29Z" fill="#f6f6f6" stroke="#a8a8a8" />
    <path d="M12 26C14 18 19 18 23 23L27 26" fill="none" stroke="#8cb07a" strokeWidth="2.200" />
    <path d="M14 7 29 5 31 19 16 20Z" fill="#fafafa" stroke="#a8a8a8" />
    <path d="M20 16C21 8 25 8 27 11L29 16" fill="none" stroke="#a98acb" strokeWidth="2.200" />
    <path d="M1 6 16 1 21 15 6 20Z" fill="#fcfcfc" stroke="#9f9f9f" />
    <path d="M6 17C5 9 8 6 11 7L17 9" fill="none" stroke="#6fa0cf" strokeWidth="2.400" />
    <path d="M26 0H32L29 4Z" fill="#444" />
  </svg>
);

const LayoutIcon = () => (
  <svg width="32" height="30" viewBox="0 0 32 30">
    <rect x=".5" y="2.500" width="23" height="20" fill="#f7f7f7" stroke="#8b8b8b" />
    <path d="M1 5H23" stroke="#c9c9c9" />
    <path d="M2 17 5 13 8 14 11 9" fill="none" stroke="#8fb1d6" strokeWidth="1.800" />
    <rect x="5.500" y="7.500" width="23" height="21" fill="#fbfbfb" stroke="#8b8b8b" />
    <path d="M6 10H28" stroke="#cfcfcf" />
    <path d="M7 24 10 21 12 23 15 18 18 21 21 17 23 18 25 14 28 13" fill="none" stroke="#7ba4d2" strokeWidth="2.200" />
    <path d="M26 2H32L29 6Z" fill="#444" />
  </svg>
);

const ContentIcon = () => (
  <svg width="16" height="28" viewBox="0 0 16 28">
    <rect x=".5" y=".5" width="15" height="27" fill="#fff" stroke="#858585" />
    <rect x="1" y="1" width="14" height="3" fill="#b5b5b5" />
    <rect x="1" y="4" width="4" height="23" fill="#e2e2e2" />
    <path d="M1 8.500H15M1 12.500H15M1 16.500H15M1 20.500H15M1 24.500H15" stroke="#cdcdcd" />
    <path d="M5.500 4V27" stroke="#bbb" />
  </svg>
);

const InspectorIcon = () => (
  <svg width="30" height="30" viewBox="0 0 30 30">
    <defs>
      <linearGradient id="infoFill" x1="0" y1="0" x2="0" y2="1">
        <stop offset="0" stopColor="#75829f" />
        <stop offset="1" stopColor="#adb9d6" />
      </linearGradient>
    </defs>
    <circle cx="15" cy="15" r="13.500" fill="url(#infoFill)" stroke="#66718a" strokeWidth="1.400" />
    <circle cx="15" cy="7.500" r="2.800" fill="#fff" />
    <path d="M11 11.500H17.300V21.500H19.500V24H10.800V21.500H13V14H11Z" fill="#fff" />
  </svg>
);

/* ---------- chart parts ---------- */

const LEGEND_HEIGHT = 15;
const barX = (i: number) => 6.5 + i * 5;
const snap = (y: number) => Math.floor(y) + 0.5;
const project = (s: Scale, v: number) => v / s.unit + s.origin + 0.2;

function gridRows(grid: Grid, height: number) {
  const rows: { y: number; major: boolean; label?: string }[] = [];
  const minor = grid.step / 5;
  const start = -Math.floor(grid.first / minor);
  for (let n = start; grid.first + n * minor < height; n++) {
    const major = n % 5 === 0;
    rows.push({ y: snap(grid.first + n * minor), major, label: major ? grid.labels[n / 5] : undefined });
  }
  return rows;
}

function SoftBar({ i, y, height, core, edge }: { i: number; y: number; height: number; core: string; edge: string }) {
  return (
    <>
      <rect x={5 + i * 5} y={y} width="3" height={height} fill={edge} />
      <rect x={6 + i * 5} y={y} width="1" height={height} fill={core} />
    </>
  );
}

function Plot({ pane, verticals }: { pane: PaneData; verticals: number[] }) {
  const height = pane.height - LEGEND_HEIGHT - 1;
  const y = (v: number) => project(pane.scale, v);
  const path = (points: Point[]) => points.map(([i, v]) => `${barX(i)},${y(v).toFixed(1)}`).join(" ");
  return (
    <svg width="100%" height={height} aria-hidden="true">
      <g shapeRendering="crispEdges">
        {pane.grid &&
          gridRows(pane.grid, height).map((r) => (
            <line key={r.y} x1="2" x2="100%" y1={r.y} y2={r.y} stroke={r.major ? "#e0e0e0" : "#f0f0f0"} />
          ))}
        {!pane.strip &&
          verticals.map((x) => <line key={x} x1={x + 0.5} x2={x + 0.5} y1="0" y2={height} stroke="#e2e2e2" />)}
        {pane.rule && <line x1="2" x2="100%" y1={pane.rule.y + 0.5} y2={pane.rule.y + 0.5} stroke={pane.rule.color} />}
        {pane.flat !== undefined && (
          <>
            <line x1="2" x2="100%" y1={pane.flat + 0.5} y2={pane.flat + 0.5} stroke="#9a9a9a" />
            <line x1="6" x2="507" y1={pane.flat + 0.5} y2={pane.flat + 0.5} stroke="#006400" />
          </>
        )}
        {pane.strip?.split("").map((c, i) => (
          <SoftBar key={i} i={i} y={0} height={6} core={c === "g" ? "#00c400" : "#f00000"} edge={c === "g" ? "#7fe07f" : "#f88080"} />
        ))}
        {pane.marks?.map((i) => <SoftBar key={i} i={i} y={1} height={7} core="#f00000" edge="#fa8080" />)}
        {pane.volume?.map((v, i) => (
          <SoftBar key={i} i={i} y={Math.round(y(v))} height={height} core="#40627f" edge="#a3b6c7" />
        ))}
        {pane.hatch?.map((v, i) => <line key={i} x1={barX(i)} x2={barX(i)} y1="0" y2={y(v)} stroke="#7fa2dc" />)}
        {pane.bars?.map(([high, low, , up], i) => (
          <line key={i} x1={barX(i)} x2={barX(i)} y1={y(high)} y2={y(low)} stroke={up ? "#00b000" : "#f40000"} />
        ))}
        {pane.timeTicks &&
          Array.from({ length: 105 }, (_, i) => (
            <line
              key={i}
              x1={barX(i)}
              x2={barX(i)}
              y1={height - (pane.timeTicks === "weeks" && i % 5 === 0 ? 3 : 1)}
              y2={height}
              stroke="#666"
            />
          ))}
      </g>
      {pane.lines?.map((l, i) => (
        <polyline key={i} points={path(l.points)} fill="none" stroke={l.color} strokeWidth="1.2" />
      ))}
      {pane.bars && (
        <>
          <polyline
            points={pane.bars.map((b, i) => `${barX(i)},${y(b[2]).toFixed(1)}`).join(" ")}
            fill="none"
            stroke="#16167a"
            strokeWidth="1.2"
          />
          {pane.bars.map((b, i) => (
            <rect key={i} x={barX(i) - 0.5} y={y(b[2]) - 0.5} width="2" height="1" fill="#000022" />
          ))}
        </>
      )}
      {pane.trends?.map((t, i) => (
        <g key={i}>
          <line x1={t.line[0]} y1={t.line[1]} x2={t.line[2]} y2={t.line[3]} stroke="#3c3c3c" />
          {t.dots.map(([n, dy]) => (
            <circle key={n} cx={barX(n)} cy={dy} r="2.2" fill="#7474dc" stroke="#3a3a8c" strokeWidth=".8" />
          ))}
        </g>
      ))}
    </svg>
  );
}

function Axis({ pane }: { pane: PaneData }) {
  const height = pane.height - 1;
  const rows = pane.grid ? gridRows(pane.grid, height - LEGEND_HEIGHT) : [];
  if (pane.flat !== undefined) rows.push({ y: pane.flat + 0.5, major: true, label: "100.00" });
  return (
    <svg width="59" height={height} fontSize="11" fontFamily={chartFont}>
      {rows.map((r) => (
        <g key={r.y}>
          <line
            x1="0"
            x2={r.major ? 2 : 1}
            y1={r.y + LEGEND_HEIGHT}
            y2={r.y + LEGEND_HEIGHT}
            stroke="#555"
            shapeRendering="crispEdges"
          />
          {r.label && <text x="4" y={Math.floor(r.y) + LEGEND_HEIGHT + 4}>{r.label}</text>}
        </g>
      ))}
    </svg>
  );
}

function Pane({ pane, verticals }: { pane: PaneData; verticals: number[] }) {
  return (
    <PaneRow $height={pane.height}>
      <PlotColumn>
        <Legend>
          {pane.legend.map((item) => (
            <LegendEntry key={item.label}>
              <span>{item.label}</span>
              {item.value && <LegendValue $color={item.color ?? "#000"}>{item.value}</LegendValue>}
              {item.swatch === "bars" && <SwatchBars $color={item.color ?? "#000"} />}
              {item.swatch === "line" && <SwatchLine $color={item.color ?? "#000"} />}
            </LegendEntry>
          ))}
        </Legend>
        <Plot pane={pane} verticals={verticals} />
      </PlotColumn>
      <AxisColumn>
        <Axis pane={pane} />
        <PaneMenu aria-label="Pane menu"><MenuMark /></PaneMenu>
      </AxisColumn>
    </PaneRow>
  );
}

function TimeAxis({ chart }: { chart: ChartData }) {
  return (
    <Time>
      <PlotColumn>
        <svg width="100%" height="22" fontSize="11" fontFamily={chartFont}>
          <line x1="0" x2="100%" y1="11.5" y2="11.5" stroke={lineColor} shapeRendering="crispEdges" />
          {chart.months.map((m, i) => (
            <g key={m.x}>
              {i > 0 && <line x1={m.x + 0.5} x2={m.x + 0.5} y1="0" y2="11" stroke={lineColor} />}
              <text x={m.x + 2} y="10">{m.label}</text>
            </g>
          ))}
          {chart.years.map((m, i) => (
            <g key={m.x}>
              {i > 0 && <line x1={m.x + 0.5} x2={m.x + 0.5} y1="0" y2="22" stroke={lineColor} />}
              <text x={m.x + 3} y="21">{m.label}</text>
            </g>
          ))}
        </svg>
      </PlotColumn>
      <AxisColumn>
        <Period>{chart.period}</Period>
        <PaneMenu aria-label="Choose period"><MenuMark /></PaneMenu>
      </AxisColumn>
    </Time>
  );
}

/* ---------- window ---------- */

const lights = {
  on: [["#e8453c", "#9c2c24"], ["#f5a93a", "#a66a20"], ["#72c548", "#43822a"]],
  off: [["#d8d8d8", "#999"], ["#d8d8d8", "#999"], ["#d8d8d8", "#999"]],
};
const lightNames = ["Close", "Minimize", "Zoom"];

function ChartWindow({ chart }: { chart: ChartData }) {
  const a = chart.active;
  return (
    <WindowFrame $active={a}>
      <TitleBar $active={a}>
        <Lights $active={a}>
          {lights[a ? "on" : "off"].map(([tone, edge], i) => (
            <Light key={i} $tone={tone} $edge={edge} aria-label={lightNames[i]} />
          ))}
        </Lights>
        <Title $active={a}><DocIcon />{chart.title}</Title>
        <Pill $active={a} aria-label="Toggle toolbar" />
      </TitleBar>

      <Toolbar $active={a}>
        <ToolItem $width={84}>
          <ToolFace>
            <Segments $active={a}>
              <Segment $on $active={a} aria-label="Crosshair"><CrossIcon /></Segment>
              <Segment $on={false} $active={a} aria-label="Line"><SlashIcon /></Segment>
              <Segment $on={false} $active={a}><LetterA>A</LetterA></Segment>
            </Segments>
          </ToolFace>
          <ToolLabel>Tool Mode</ToolLabel>
        </ToolItem>
        <Divider $gap={15} />
        <ToolItem $width={30} $gap={10}>
          <ToolButton $small aria-label="Prev"><StepIcon /></ToolButton>
          <ToolLabel>Prev</ToolLabel>
        </ToolItem>
        <ToolItem $width={34} $gap={1}>
          <ToolButton $small aria-label="Next"><StepIcon down /></ToolButton>
          <ToolLabel>Next</ToolLabel>
        </ToolItem>
        <ToolItem $width={64} $gap={14}>
          <ToolFace>
            <ToolButton $small aria-label="Zoom out"><ZoomIcon /></ToolButton>
            <ToolButton $small aria-label="Zoom in"><ZoomIcon plus /></ToolButton>
          </ToolFace>
          <ToolLabel>Zoom Level</ToolLabel>
        </ToolItem>
        <Divider $gap={14} />
        <ToolItem $width={56} $gap={10}>
          <ToolButton aria-label="Indicators"><IndicatorsIcon /></ToolButton>
          <ToolLabel>Indicators</ToolLabel>
        </ToolItem>
        <ToolItem $width={58} $gap={8}>
          <ToolButton aria-label="Templates"><TemplatesIcon /></ToolButton>
          <ToolLabel>Templates</ToolLabel>
        </ToolItem>
        <Spacer />
        <ToolItem $width={40}>
          <ToolButton aria-label="Layout"><LayoutIcon /></ToolButton>
          <ToolLabel>Layout</ToolLabel>
        </ToolItem>
        <Divider $gap={11} />
        <ToolItem $width={46} $gap={9}>
          <ToolButton aria-label="Content"><ContentIcon /></ToolButton>
          <ToolLabel>Content</ToolLabel>
        </ToolItem>
        <ToolItem $width={52} $gap={7}>
          <ToolButton aria-label="Inspector"><InspectorIcon /></ToolButton>
          <ToolLabel>Inspector</ToolLabel>
        </ToolItem>
      </Toolbar>

      <Body>
        <Sidebar $active={a}>
          <ListHeader $active={a}><span>Content</span></ListHeader>
          <ListArea>
            <SymbolList>
              {symbols.map((s, i) => (
                <SymbolRow key={i} $shade={i % 2 === 0} $selected={s === "^GSPC"} $active={a}>
                  <SymbolButton>{s}</SymbolButton>
                </SymbolRow>
              ))}
            </SymbolList>
            <VScroll>
              <VTrack><VThumb $active={a} /></VTrack>
              <VArrow aria-label="Scroll up"><Triangle dir="up" /></VArrow>
              <VArrow aria-label="Scroll down"><Triangle dir="down" /></VArrow>
            </VScroll>
          </ListArea>
          <SideFooter $active={a}>
            <GearButton $active={a} aria-label="Actions">
              <FaCog size={13} />
              <Triangle dir="down" size={6} color="currentColor" />
            </GearButton>
            <span>All</span>
          </SideFooter>
        </Sidebar>

        <ChartArea>
          <Quote>
            <span>^GSPC</span>
            <span>S&amp;P 500</span>
            <span>{chart.range}</span>
            <span>{chart.price}</span>
            <span>{chart.change}</span>
          </Quote>
          {chart.panes.map((pane, i) => (
            <Pane key={i} pane={pane} verticals={chart.verticals} />
          ))}
          <TimeAxis chart={chart} />
          <HScroll>
            <HTrack><HThumb $active={a} /></HTrack>
            <HArrow aria-label="Scroll left"><Triangle dir="left" /></HArrow>
            <HArrow aria-label="Scroll right"><Triangle dir="right" /></HArrow>
            <Grip><GripIcon /></Grip>
          </HScroll>
        </ChartArea>
      </Body>
    </WindowFrame>
  );
}

export default function App() {
  return (
    <>
      <GlobalStyle />
      <Desktop>
        <ChartWindow chart={weekly} />
        <ChartWindow chart={daily} />
      </Desktop>
    </>
  );
}
